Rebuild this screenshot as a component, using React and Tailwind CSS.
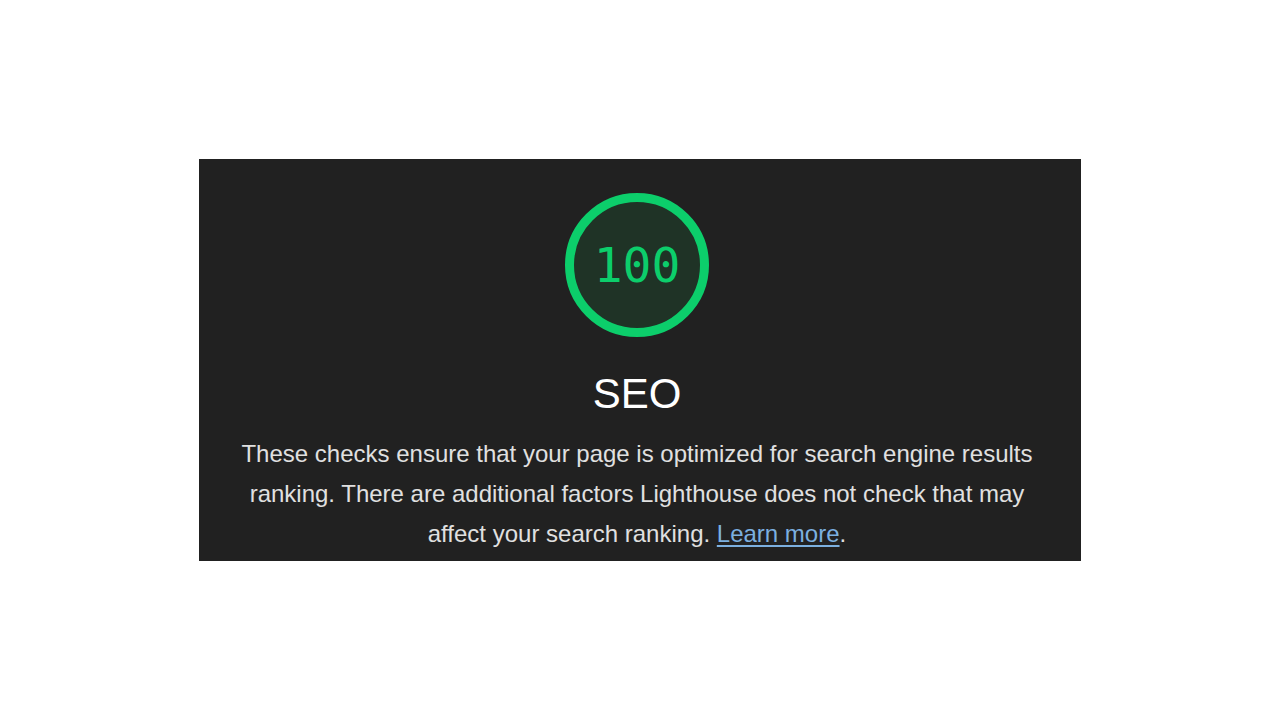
const mono = '"DejaVu Sans Mono", "Liberation Mono", monospace'

function Gauge({ score }) {
  return (
    <div className="relative w-[146px] h-[146px]">
      <svg width="146" height="146" viewBox="0 0 146 146" className="absolute inset-0">
        <circle cx="73" cy="73" r="67.5" fill="#1f3326" stroke="#0cce6b" strokeWidth="9" />
      </svg>
      <div
        className="absolute inset-0 flex items-center justify-center text-[#0cce6b] text-[48px] leading-none"
        style={{ fontFamily: mono }}
      >
        {score}
      </div>
    </div>
  )
}

export default function App() {
  return (
    <div className="w-[1280px] h-[720px] bg-white pt-[159px]">
      <div
        className="mx-auto w-[882px] h-[402px] bg-[#212121] flex flex-col items-center pt-[33px] pl-[33px] pr-[39px]"
        style={{ fontFamily: '"Liberation Sans", Arial, sans-serif' }}
      >
        <Gauge score="100" />
        <h2 className="mt-[32px] text-[42px] leading-[48px] text-white">SEO</h2>
        <p className="mt-[16px] text-center text-[24px] leading-[40px] text-[#e0e0e0]">
          These checks ensure that your page is optimized for search engine results ranking. There are additional factors Lighthouse does not check that may affect your search ranking.{' '}
          <a href="#" className="text-[#7cb0e0] underline underline-offset-[3px]">Learn more</a>.
        </p>
      </div>
    </div>
  )
}
